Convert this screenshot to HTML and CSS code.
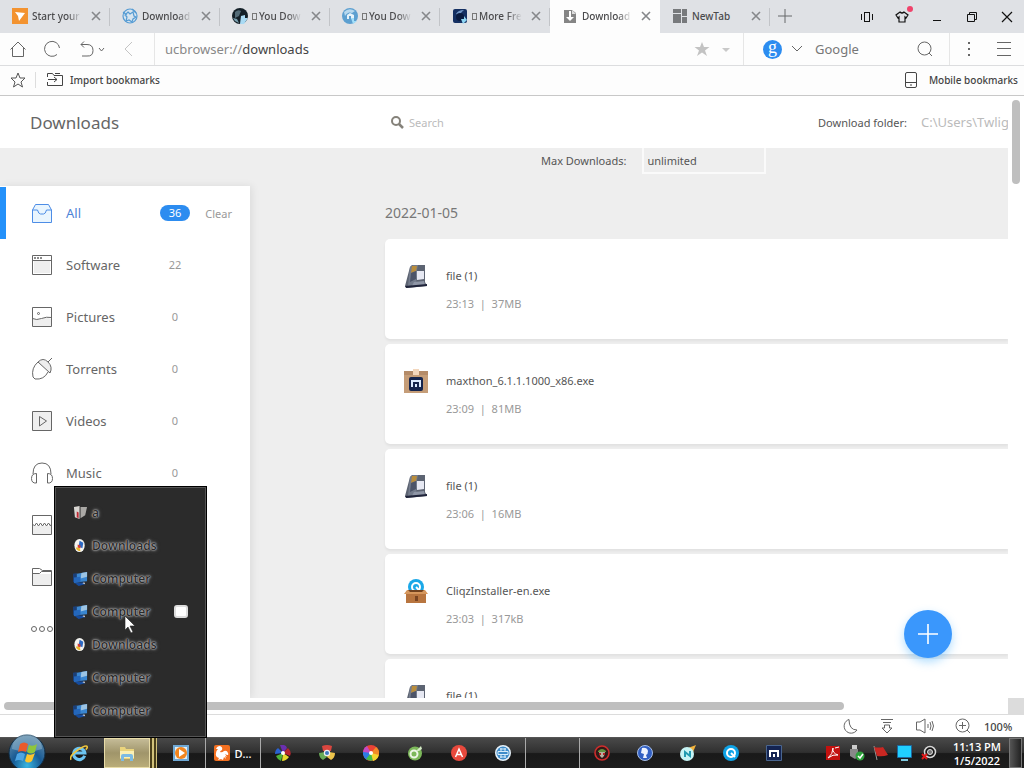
FILE: index.html
```
<!DOCTYPE html>
<html lang="en">
<head>
    <meta charset="UTF-8">
    <meta name="viewport" content="width=device-width, initial-scale=1.0">
    <title>Downloads</title>
    <link rel="stylesheet" href="styles.css">
</head>
<body>
    <!-- shared icons -->
    <svg class="sprite" aria-hidden="true">
        <symbol id="close" viewBox="0 0 16 16"><path d="M4 4l8 8M12 4l-8 8" stroke="#85878a" stroke-width="1.6"/></symbol>
        <symbol id="file" viewBox="0 0 24 24">
            <path d="M1 22L6 3l2-2h13v17l2 4L3 24z" fill="#5d6472"/>
            <path d="M6 3l3-2h5l-2 20-8 1z" fill="#747c8c"/>
            <path d="M8 2h5l-1 5-5 2z" fill="#b98d3c"/>
            <path d="M7 9l5-2v8l-6 3z" fill="#4c5468"/>
            <path d="M14 2h6v4l-7 1z" fill="#5c6472"/>
            <path d="M13 7h7v8l-7 1z" fill="#e6e8f2"/>
            <path d="M10 18l10-1 1 4-13 1z" fill="#8f96a6"/>
            <path d="M1 22l22-2v2L2 24z" fill="#20243a"/>
        </symbol>
        <symbol id="computer" viewBox="0 0 16 16">
            <path d="M0 3l4-1v9l-4 1z" fill="#1b3f78"/>
            <path d="M4 3l11-2v10L4 12z" fill="#3a86d0"/>
            <path d="M9 2l6-1v5l-7 2z" fill="#9cc4e4"/>
            <path d="M1 7l7-1v6l-7 1z" fill="#2467bb"/>
            <path d="M2 13l9-1 2 2-7 2z" fill="#154b9e"/>
            <path d="M10 13l2-1 1 2z" fill="#ddd"/>
        </symbol>
        <symbol id="downloads" viewBox="0 0 16 16">
            <ellipse cx="7" cy="8" rx="5.500" ry="7" fill="#f4f4f0"/>
            <path d="M3 10q1 4 5 4l-1-4z" fill="#e8b62c"/>
            <path d="M7 3l4 2-1 6-4-2z" fill="#2c69c4"/>
            <path d="M5 7l3 1v3l-3-1z" fill="#d23c35"/>
        </symbol>
    </svg>

    <header class="tabs">
        <div class="tab">
            <svg class="favicon" viewBox="0 0 16 16"><path fill="#f39330" d="M0 0h16v16H0z"/><path d="M3 4l10 1-6 8-1-5z" fill="#fff"/></svg>
            <span class="tab-title">Start your</span>
            <button class="tab-close" aria-label="Close tab"><svg><use href="#close"/></svg></button>
        </div>
        <div class="tab">
            <svg class="favicon" viewBox="0 0 16 16" fill="none" stroke="#559bd3" stroke-width="1.2"><circle cx="8" cy="8" r="7" fill="#d6e4ef"/><path d="M1 4l4 3M6 4l2 2 3-2 1 4 2 1-3 2-1 3-3-2-3 1 1-4-2-2zM10 1l4 4"/></svg>
            <span class="tab-title">Download</span>
            <button class="tab-close" aria-label="Close tab"><svg><use href="#close"/></svg></button>
        </div>
        <div class="tab">
            <svg class="favicon" viewBox="0 0 16 16"><circle cx="8" cy="8" r="8" fill="#142028"/><path d="M3 4q3-3 6-1L7 8l-4 2z" fill="#536b77"/><path d="M9 8l4-1v3h3l-4 6H8z" fill="#a9daf4"/><path d="M1 10l4 1 2 4-4-2z" fill="#7ca2b2"/></svg>
            <span class="tab-title"><i class="missing"></i>You Dow</span>
            <button class="tab-close" aria-label="Close tab"><svg><use href="#close"/></svg></button>
        </div>
        <div class="tab">
            <svg class="favicon" viewBox="0 0 16 16"><circle cx="8" cy="8" r="8" fill="#5c9fd0"/><path d="M2 4q5-5 11-1l-3 2q-4-2-7 3z" fill="#b7d8ee"/><path d="M5 11V7l3-2 4 2v4H9V8H7v3z" fill="#e5f2fa"/><path d="M9 10h3v3h3l-4 3z" fill="#a2def9"/></svg>
            <span class="tab-title"><i class="missing"></i>You Dow</span>
            <button class="tab-close" aria-label="Close tab"><svg><use href="#close"/></svg></button>
        </div>
        <div class="tab">
            <svg class="favicon" viewBox="0 0 16 16"><rect x="1" y="1" width="14" height="14" rx="2" fill="#142f62"/><path d="M4 6q2-4 8-4-4 3-4 6z" fill="#7095c6"/><circle cx="8" cy="9" r="4" fill="#0a1b40"/><path d="M9 11h3V8l3 4-4 4z" fill="#8ed5f3"/></svg>
            <span class="tab-title"><i class="missing"></i>More Fre</span>
            <button class="tab-close" aria-label="Close tab"><svg><use href="#close"/></svg></button>
        </div>
        <div class="tab active">
            <svg class="favicon" viewBox="0 0 16 16"><path d="M2 2h8l4 3v10H2z" fill="#858585"/><path d="M10 2v4h4z" fill="#ddd"/><path d="M7 3h2v6h3l-4 4-4-4h3z" fill="#fff"/></svg>
            <span class="tab-title">Download</span>
            <button class="tab-close" aria-label="Close tab"><svg><use href="#close"/></svg></button>
        </div>
        <div class="tab last">
            <svg class="favicon" viewBox="0 0 16 16" fill="#77797c"><path d="M1 1h8v4H1zM1 6h8v9H1zM10 1h5v7h-5zM10 9h5v6h-5z"/></svg>
            <span class="tab-title">NewTab</span>
            <button class="tab-close" aria-label="Close tab"><svg><use href="#close"/></svg></button>
        </div>
        <button class="new-tab" aria-label="New tab"><svg width="14" height="14" viewBox="0 0 14 14"><path d="M7 0v14M0 7h14" stroke="#66686b"/></svg></button>
        <div class="window-buttons">
            <button aria-label="Phone"><svg width="14" height="14" viewBox="0 0 14 14" fill="none" stroke="#111"><rect x="4.500" y="2.500" width="5" height="9"/><path d="M1.500 4v6M12.500 4v6"/></svg></button>
            <button class="skin" aria-label="Skins"><svg width="14" height="14" viewBox="0 0 14 14" fill="none" stroke="#111" stroke-width="1.2"><path d="M5 2q2 2 4 0l4 3-2 3-1-1v5H4V7L3 8 1 5z"/></svg></button>
            <button aria-label="Minimize"><svg width="14" height="14" viewBox="0 0 14 14"><path d="M3 10.500h8" stroke="#111"/></svg></button>
            <button aria-label="Restore"><svg width="14" height="14" viewBox="0 0 14 14" fill="none" stroke="#111"><path d="M2.500 4.500h7v7h-7zM4.500 4V2.500h7v7H10"/></svg></button>
            <button aria-label="Close"><svg width="14" height="14" viewBox="0 0 14 14"><path d="M2 2l10 10M12 2L2 12" stroke="#111" stroke-width="1.200"/></svg></button>
        </div>
    </header>

    <div class="toolbar">
        <div class="nav">
            <button class="nav-btn" aria-label="Home"><svg width="18" height="18" viewBox="0 0 18 18"><path d="M1.500 9.500L9 2l7.500 7.500M3.500 8v8.500h11V8"/></svg></button>
            <button class="nav-btn" aria-label="Reload"><svg width="18" height="18" viewBox="0 0 18 18"><path d="M13 14.500A7.500 7.500 0 1 1 15.500 8"/></svg></button>
            <button class="nav-btn" aria-label="Undo close tab"><svg width="26" height="18" viewBox="0 0 26 18"><path d="M5 1.500L2 4.500l3 3M2 4.500h6q6 0 6 6t-6 5.500H3M20 8l2.500 3L25 8"/></svg></button>
            <button class="nav-btn back" aria-label="Back"><svg width="18" height="18" viewBox="0 0 18 18"><path d="M10 2L3 9l7 7"/></svg></button>
        </div>
        <div class="address">
            <span class="url"><span class="scheme">ucbrowser://</span>downloads</span>
            <button class="plain" aria-label="Bookmark"><svg width="16" height="16" viewBox="0 0 16 16"><path d="M8 1l2 5h5.500l-4.500 3.500 2 5.500-5-3.500L3 15l2-5.500L.5 6H6z" fill="#c3c3c3"/></svg></button>
            <button class="plain" aria-label="Bookmark options"><svg width="16" height="16" viewBox="0 0 16 16"><path d="M4 7h8l-4 4z" fill="#c9c9c9"/></svg></button>
        </div>
        <div class="engine">
            <span class="engine-logo">g</span>
            <button class="plain" aria-label="Choose engine"><svg width="12" height="12" viewBox="0 0 12 12"><path d="M1 3l5 5 5-5" fill="none" stroke="#666"/></svg></button>
            <input type="text" class="engine-input" placeholder="Google" aria-label="Google">
            <button class="plain" aria-label="Search the web"><svg width="16" height="16" viewBox="0 0 16 16" fill="none" stroke="#666"><circle cx="7.500" cy="7.500" r="6.500"/><path d="M12 12l3 3"/></svg></button>
        </div>
        <div class="menus">
            <button class="plain" aria-label="More"><svg width="16" height="16" viewBox="0 0 16 16" fill="#666"><path d="M7 1h2v2H7zM7 7h2v2H7zM7 13h2v2H7z"/></svg></button>
            <button class="plain" aria-label="Menu"><svg width="16" height="16" viewBox="0 0 16 16"><path d="M1 1.500h14M1 7.500h14M1 14.500h14" stroke="#666"/></svg></button>
        </div>
    </div>

    <div class="bookmarks">
        <button class="plain star" aria-label="Bookmarks"><svg width="16" height="16" viewBox="0 0 16 16"><path d="M8 1l2 5h5l-4 4 1.500 5L8 12l-4.500 3L5 10 1 6h5z" fill="none" stroke="#555"/></svg></button>
        <button class="bookmark-link"><svg width="16" height="16" viewBox="0 0 16 16" fill="none" stroke="#444"><path d="M.5 5V1.500h5L7 3.500h8.500v10H.5V10M8 1.500h5M1 7.500h9M7 5l3 2.500-3 2.500"/></svg>Import bookmarks</button>
        <button class="bookmark-link mobile"><svg width="12" height="16" viewBox="0 0 12 16" fill="none" stroke="#444"><rect x=".5" y=".5" width="11" height="15" rx="1.500"/><path d="M1 10.500h10M5 13h2"/></svg>Mobile bookmarks</button>
    </div>

    <main class="view">
        <div class="page">
            <div class="page-head">
                <h1>Downloads</h1>
                <label class="search">
                    <svg width="13" height="13" viewBox="0 0 13 13" fill="none" stroke="#85827a"><circle cx="5" cy="5" r="4" stroke-width="2"/><path d="M8 8l4 4" stroke-width="2.500"/></svg>
                    <input type="text" placeholder="Search" aria-label="Search">
                </label>
                <label for="folder">Download folder:</label>
                <input type="text" id="folder" value="C:\Users\Twlig">
            </div>
            <div class="limit">
                <label for="max">Max Downloads:</label>
                <select id="max"><option>unlimited</option></select>
            </div>
            <div class="columns">
                <nav class="sidebar">
                    <a href="#" class="cat current">
                        <svg viewBox="0 0 22 22"><path d="M1.500 8v12.500h19V8M1.500 8l3-5.500h13l3 5.500M1.500 8h5q1 4 3 4h3q2 0 3-4h5"/></svg>
                        <span>All</span><b class="count">36</b><span class="clear">Clear</span>
                    </a>
                    <a href="#" class="cat">
                        <svg viewBox="0 0 22 22"><path class="shade" d="M3 7h16v12H3z"/><path d="M1.500 1.500h19v19h-19zM1.500 6.500h19"/><path d="M3 4h2m1 0h2m1 0h2" stroke-width="1.500"/></svg>
                        <span>Software</span><b class="count">22</b>
                    </a>
                    <a href="#" class="cat">
                        <svg viewBox="0 0 22 22"><path class="shade" d="M2 13q5 2 9 0t9 0v7H2z"/><path d="M1.500 1.500h19v19h-19zM1.500 12.500q4 2 9 0t10-1"/><circle cx="7.500" cy="7.500" r="1"/></svg>
                        <span>Pictures</span><b class="count">0</b>
                    </a>
                    <a href="#" class="cat">
                        <svg viewBox="0 0 22 22"><path class="shade" d="M7 4q5-4 10 1t2 10z"/><path d="M7 4L19 15M7 4q5-5 10 0t2 11M7 4q-7 6-5 15l2 2q9 1 13-7M17 4l4-4"/></svg>
                        <span>Torrents</span><b class="count">0</b>
                    </a>
                    <a href="#" class="cat">
                        <svg viewBox="0 0 22 22"><path class="shade" d="M2 2h18v18H2z"/><path d="M1.500 1.500h19v19h-19zM8.500 6.500l7 4.500-7 5z"/></svg>
                        <span>Videos</span><b class="count">0</b>
                    </a>
                    <a href="#" class="cat">
                        <svg viewBox="0 0 22 22"><path d="M2 12q0-11 9-11t9 11M5.500 11.500q-5 0-5 5t5 4.500zM16.500 11.500q5 0 5 5t-5 4.500z"/></svg>
                        <span>Music</span><b class="count">0</b>
                    </a>
                    <a href="#" class="cat" aria-label="Archives">
                        <svg viewBox="0 0 22 22"><path class="shade" d="M2 12h18v8H2z"/><path d="M1.500 1.500h19v19h-19zM1.500 10l2 2 2-3 2 3 2-3 2 3 2-3 2 3 2-3 2 3 1-2"/></svg>
                    </a>
                    <a href="#" class="cat" aria-label="Documents">
                        <svg viewBox="0 0 22 22"><path class="shade" d="M2 8h18v11H2z"/><path d="M1.500 2.500h7l3 2h9v15h-19zM1.500 7.500h7l2-2h10"/></svg>
                    </a>
                    <a href="#" class="cat" aria-label="Other">
                        <svg viewBox="0 0 22 22"><circle cx="3" cy="11" r="2.500"/><circle cx="11" cy="11" r="2.500"/><circle cx="19" cy="11" r="2.500"/></svg>
                    </a>
                </nav>
                <section class="list">
                    <h2>2022-01-05</h2>
                    <article class="card">
                        <svg><use href="#file"/></svg>
                        <div><p class="name">file (1)</p><p class="meta">23:13&nbsp; |&nbsp; 37MB</p></div>
                    </article>
                    <article class="card">
                        <svg viewBox="0 0 24 24"><path d="M0 2h24v22H0z" fill="#c59d78"/><path d="M0 2h24v4H0z" fill="#b48b68"/><path d="M9 0h6v6H9z" fill="#f3d7bd"/><rect x="5" y="8" width="14" height="14" rx="2" fill="#14244d"/><path d="M8 18v-6h8v6M12 18v-3" fill="none" stroke="#dcebff" stroke-width="2"/></svg>
                        <div><p class="name">maxthon_6.1.1.1000_x86.exe</p><p class="meta">23:09&nbsp; |&nbsp; 81MB</p></div>
                    </article>
                    <article class="card">
                        <svg><use href="#file"/></svg>
                        <div><p class="name">file (1)</p><p class="meta">23:06&nbsp; |&nbsp; 16MB</p></div>
                    </article>
                    <article class="card">
                        <svg viewBox="0 0 24 24"><circle cx="12" cy="8" r="8" fill="#1ba8e8"/><circle cx="12" cy="8" r="4" fill="none" stroke="#fff" stroke-width="2"/><path d="M12 8l4 4" stroke="#fff" stroke-width="2"/><path d="M2 12h20v12H2z" fill="#b8753f"/><path d="M0 15l3-4h18l3 4z" fill="#d6975d"/><path d="M4 11h16l-2 2H6z" fill="#71421f"/><path d="M11 17h3v5h-3z" fill="#7a4522"/></svg>
                        <div><p class="name">CliqzInstaller-en.exe</p><p class="meta">23:03&nbsp; |&nbsp; 317kB</p></div>
                    </article>
                    <article class="card">
                        <svg><use href="#file"/></svg>
                        <div><p class="name">file (1)</p></div>
                    </article>
                </section>
            </div>
        </div>
        <div class="vbar"><div class="thumb"></div></div>
        <div class="hbar"><div class="thumb"></div></div>
        <div class="corner"></div>
        <button class="add" aria-label="New download"><svg width="20" height="20" viewBox="0 0 20 20"><path d="M10 0v20M0 10h20" stroke="#fff" stroke-width="1.600"/></svg></button>
    </main>

    <footer class="status">
        <button class="plain" aria-label="Night mode"><svg width="16" height="16" viewBox="0 0 16 16"><path d="M6 1.500A7 7 0 1 0 14 12Q6 12 6 1.500z"/></svg></button>
        <button class="plain" aria-label="Downloads"><svg width="16" height="16" viewBox="0 0 16 16"><path d="M2 1.500h12M4 4.500h8M5.500 7v3H3l5 5 5-5h-2.500V7z"/></svg></button>
        <button class="plain sound" aria-label="Sound"><svg width="20" height="16" viewBox="0 0 20 16"><path d="M1.500 4v8H5l5 3V1L5 4zM13 6v4M15 4q2 4 0 8M17 3q3 5 0 10"/></svg></button>
        <button class="plain" aria-label="Zoom"><svg width="16" height="16" viewBox="0 0 16 16"><circle cx="7.500" cy="7.500" r="6.500"/><path d="M4 7.500h7M7.500 4v7M12 12l3 3"/></svg></button>
        <span class="zoom">100%</span>
    </footer>

    <div class="taskbar">
        <button class="start" aria-label="Start"><svg width="38" height="38" viewBox="0 0 38 38">
            <defs><radialGradient id="orb" cx=".5" cy=".85" r=".8"><stop offset="0" stop-color="#38b6e2"/><stop offset=".5" stop-color="#175a94"/><stop offset="1" stop-color="#5f89a8"/></radialGradient></defs>
            <circle cx="19" cy="19" r="18" fill="url(#orb)" stroke="#102c44"/>
            <path d="M4 15a15 15 0 0 1 30 0q-15 5-30 0z" fill="#9fc0d4" opacity=".45"/>
            <path d="M12 10q4-3 8 0l-2 8q-4-2-8 0z" fill="#ea5a2a"/><path d="M21 11q4 2 8-1l-2 8q-4 3-8 0z" fill="#8fc63d"/>
            <path d="M9 20q4-3 8 0l-2 7q-4-2-8 0z" fill="#4da5e4"/><path d="M19 20q4 2 8-1l-3 8q-4 3-7 0z" fill="#fbc42d"/>
        </svg></button>
        <button class="task pin" aria-label="Internet Explorer"><svg viewBox="0 0 16 16" fill="none"><path d="M13 10.500A5 5 0 1 1 13.200 8H4" stroke="#6cc4f2" stroke-width="2.800"/><path d="M1 14q-2-3 5-8t9-4q1 1-1 3" stroke="#f0c63c" stroke-width="1.400"/></svg></button>
        <div class="explorer">
            <button class="task stacked" aria-label="Explorer"><svg viewBox="0 0 16 16"><path d="M1 2h5l1 2h8v10H1z" fill="#ead47c"/><path d="M1 6h14v7H1z" fill="#fbf0b4"/><path d="M2 16v-5q0-2 2-2h8q2 0 2 2v5h-3v-4H5v4z" fill="#7dbbe2"/></svg></button>
            <ul class="jump">
                <li><svg viewBox="0 0 16 16"><path d="M1 2l6-1v14l-5-2z" fill="#d9d6d2"/><path d="M8 2h7l-2 9-5 3z" fill="#aaa8a5"/><path d="M4 7l2 1v6l-2-1z" fill="#bf2632"/></svg>a</li>
                <li><svg><use href="#downloads"/></svg>Downloads</li>
                <li><svg><use href="#computer"/></svg>Computer</li>
                <li><svg><use href="#computer"/></svg><label for="pick">Computer</label><input type="checkbox" id="pick"></li>
                <li><svg><use href="#downloads"/></svg>Downloads</li>
                <li><svg><use href="#computer"/></svg>Computer</li>
                <li><svg><use href="#computer"/></svg>Computer</li>
            </ul>
            <svg class="cursor" viewBox="0 0 12 19"><path d="M1 1v14l3-3 3 6 2-1-3-6h5z" fill="#fff" stroke="#222" stroke-width=".6"/></svg>
        </div>
        <button class="task player" aria-label="Media player"><svg viewBox="0 0 16 16"><rect width="16" height="16" fill="#6fa9d6"/><path d="M2 2h12v12H2z" fill="#e2edf3"/><circle cx="8" cy="8" r="6" fill="#f2851e"/><path d="M6 4l6 4-6 4z" fill="#fff"/></svg></button>
        <button class="task running"><svg viewBox="0 0 16 16"><rect width="16" height="16" rx="2" fill="#f37021"/><path d="M2 4q1-3 4-3 3 1 2 4-2 1-2 2 2 1 4-1 3-1 4 2 1 2-1 2l-2-1 2 3-2-1 1 3-2-2-1 3-2-1-3 1 1-2q-4-1-3-5 0-2 2-4z" fill="#fff"/></svg>D...</button>
        <div class="group">
            <button class="task" aria-label="Slimjet"><svg viewBox="0 0 16 16"><path d="M8 8L5 0q6-1 7 3z" fill="#6b2fb0"/><path d="M8 8l5-5q4 4 2 8z" fill="#b7252f"/><path d="M8 8l6 4q-3 4-7 4z" fill="#e8d82b"/><path d="M8 8l-2 8q-4-2-5-5z" fill="#4fb33a"/><path d="M8 8L0 9q0-4 3-6z" fill="#2a62d3"/><circle cx="8" cy="8" r="2" fill="#fff"/></svg></button>
            <button class="task" aria-label="Browser"><svg viewBox="0 0 16 16"><path d="M3 1q5-2 10 0l-1 5H4z" fill="#da463f"/><path d="M0 8l6-1 2 5-4 3q-4-2-4-7z" fill="#68ab57"/><path d="M16 8l-6-1-2 5 4 3q4-2 4-7z" fill="#edc44b"/><circle cx="8" cy="8" r="3.200" fill="#f0f0f0"/><circle cx="8" cy="8" r="2" fill="#3c7abf"/></svg></button>
            <button class="task" aria-label="Color browser"><svg viewBox="0 0 16 16"><circle cx="8" cy="8" r="8" fill="#e94235"/><path d="M8 8L0 8a8 8 0 0 1 4-7z" fill="#c34ac5"/><path d="M8 8L0 7a8 8 0 0 0 4 8z" fill="#2d7de4"/><path d="M8 8l-5 6a8 8 0 0 0 8 1z" fill="#43bd4a"/><path d="M8 8l2 8a8 8 0 0 0 6-8z" fill="#f5d42e"/><path d="M8 8l8 2a8 8 0 0 0-3-8z" fill="#f28a27"/><circle cx="8" cy="8" r="2" fill="#fff"/></svg></button>
            <button class="task" aria-label="Green browser"><svg viewBox="0 0 16 16"><circle cx="8" cy="8.500" r="7" fill="#7cb85a"/><circle cx="7" cy="9" r="3.500" fill="none" stroke="#eef6e8" stroke-width="2"/><path d="M9 6l5-5 1 3-3 2z" fill="#d4ebc4"/></svg></button>
            <button class="task" aria-label="A browser"><svg viewBox="0 0 16 16"><circle cx="8" cy="8" r="8" fill="#e8493d"/><path d="M4.500 12L8 4l3.500 8M6 9.500h4" fill="none" stroke="#fff" stroke-width="1.500"/></svg></button>
            <button class="task" aria-label="Globe"><svg viewBox="0 0 16 16"><circle cx="8" cy="8" r="8" fill="#e7f2fa"/><circle cx="8" cy="8" r="6.500" fill="#3d8bc9"/><path d="M5 4h6M3 6.500h10v3H3zM5 12h6M6 3v3M10 3v3M6 10v3M10 10v3" fill="none" stroke="#d8ecfa"/></svg></button>
        </div>
        <div class="group empty"></div>
        <div class="group narrow">
            <button class="task" aria-label="Pirate"><svg viewBox="0 0 16 16"><circle cx="8" cy="8" r="7" fill="#321a18" stroke="#cf2d2c" stroke-width="1.600"/><path d="M4 6q4-4 8 0v1H4z" fill="#65953f"/><path d="M5 7h6l-1 4-2 2-2-2z" fill="#b8b0a0"/><path d="M5 8h2v2H5zM9 8h2v2H9z" fill="#b52323"/></svg></button>
            <button class="task" aria-label="Knight"><svg viewBox="0 0 16 16"><circle cx="8" cy="8" r="7.500" fill="#315fc3" stroke="#a8bfe7"/><path d="M5 3q5-1 6 3 0 3-2 4l1 3H6l1-4-3-1z" fill="#eef3ff"/></svg></button>
            <button class="task" aria-label="Comet"><svg viewBox="0 0 16 16"><path d="M8 3l8-3-3 7z" fill="#f2b33c"/><circle cx="7" cy="9" r="7" fill="#c6f3f4"/><path d="M5 12V7l5 4V6" fill="none" stroke="#219ab0" stroke-width="2"/></svg></button>
            <button class="task" aria-label="Cliqz"><svg viewBox="0 0 16 16"><circle cx="8" cy="8" r="8" fill="#0fa3e6"/><circle cx="8" cy="8" r="4" fill="none" stroke="#fff" stroke-width="2"/><path d="M8 8l4 4" stroke="#fff" stroke-width="2"/></svg></button>
            <button class="task" aria-label="Maxthon"><svg viewBox="0 0 16 16"><path d="M.5.5h15v15H.5z" fill="#142452" stroke="#49658f"/><path d="M4 12V6h8v6M8 12V9" fill="none" stroke="#fff" stroke-width="2"/></svg></button>
        </div>
        <div class="tray">
            <svg viewBox="0 0 16 16"><path d="M1 1h14v14H1z" fill="#c3110f"/><path d="M3 13q5-4 5-10-1 5 5 7-5-1-10 3M10 3l4-1" fill="none" stroke="#fff"/></svg>
            <svg viewBox="0 0 16 16"><path d="M3 0h5v4H3z" fill="#ccc"/><path d="M1 4h8v8l-3 2-5-3z" fill="#888"/><circle cx="11" cy="11" r="4.500" fill="#2da13b"/><path d="M9 11l2 2 3-4" fill="none" stroke="#fff" stroke-width="1.500"/></svg>
            <svg viewBox="0 0 16 16"><path d="M1 1l3 14" stroke="#999"/><path d="M1 2q5 1 9 0l5 8q-5 2-11 1z" fill="#c92722"/></svg>
            <svg viewBox="0 0 16 16"><path d="M.5.5h14v12H.5z" fill="#20cfff" stroke="#1e679e"/><path d="M4 14h7v2H4z" fill="#7fc9e0"/></svg>
            <svg viewBox="0 0 16 16"><circle cx="9" cy="7" r="5.500" fill="#171717" stroke="#d8d8d8" stroke-width="1.500"/><circle cx="9" cy="7" r="2.500" fill="#777" stroke="#ddd"/><path d="M1 9l5 5M6 9l-5 5" stroke="#e01818" stroke-width="2"/></svg>
        </div>
        <div class="clock">11:13 PM<br>1/5/2022</div>
        <button class="show-desktop" aria-label="Show desktop"></button>
    </div>
</body>
</html>
```
FILE: styles.css
```
* {
    box-sizing: border-box;
}
body {
    margin: 0;
    height: 100vh;
    display: flex;
    flex-direction: column;
    overflow: hidden;
    font-family: "Noto Sans", "Open Sans", sans-serif;
    font-size: 11px;
    color: #555;
    background: #fff;
}
button {
    border: none;
    background: none;
    padding: 0;
    font: inherit;
    color: inherit;
    cursor: pointer;
}
input, select {
    border: none;
    background: none;
    padding: 0;
    margin: 0;
    outline: none;
    font: inherit;
    color: inherit;
    min-width: 0;
}
svg {
    display: block;
    flex: none;
}
.sprite {
    display: none;
}

/* tab strip */
.tabs {
    display: flex;
    flex: none;
    height: 33px;
    background: #dfe1e5;
}
.tab {
    width: 110px;
    display: flex;
    align-items: center;
    padding: 0 6px 2px 12px;
    position: relative;
}
.tab::after {
    content: "";
    position: absolute;
    right: 0;
    top: 8px;
    height: 18px;
    border-right: 1px solid #c2c4c8;
}
.tab.active {
    background: #fdfdfd;
}
.tab.active::after {
    display: none;
}
.favicon {
    width: 16px;
    height: 16px;
    margin-right: 4px;
}
.tab-title {
    flex: 1;
    overflow: hidden;
    white-space: nowrap;
    font-size: 10px;
    font-weight: 500;
    color: #4a4a4c;
    mask-image: linear-gradient(to right, #000 70%, transparent);
}
.last .tab-title {
    mask-image: none;
}
.missing {
    display: inline-block;
    width: 5px;
    height: 7px;
    margin-right: 2px;
    border: 1px solid #777;
}
.tab-close {
    margin-left: 6px;
}
.tab-close svg {
    width: 16px;
    height: 16px;
}
.new-tab {
    width: 30px;
    display: flex;
    align-items: center;
    justify-content: center;
    padding-bottom: 2px;
}
.window-buttons {
    display: flex;
    margin-left: auto;
}
.window-buttons button {
    width: 35px;
    display: flex;
    align-items: center;
    justify-content: center;
    position: relative;
}
.skin::after {
    content: "";
    position: absolute;
    right: 6px;
    top: 6px;
    width: 6px;
    height: 6px;
    border-radius: 50%;
    background: #f0436b;
}

/* address bar */
.toolbar {
    display: flex;
    flex: none;
    height: 33px;
    background: #fdfdfd;
    border-bottom: 1px solid #dcdddf;
}
.nav {
    width: 154px;
    display: flex;
    align-items: center;
    gap: 17px;
    padding-left: 9px;
}
.nav-btn svg, .status svg {
    fill: none;
    stroke: #666;
}
.nav-btn.back svg {
    stroke: #c4c4c4;
}
.address {
    flex: 1;
    display: flex;
    align-items: center;
    gap: 8px;
    padding: 0 9px 0 10px;
    border-left: 1px solid #e6e6e6;
}
.url {
    flex: 1;
    font-size: 13px;
    color: #444;
}
.scheme {
    color: #888;
}
.engine {
    width: 206px;
    display: flex;
    align-items: center;
    padding: 0 16px 0 19px;
    border-left: 1px solid #e6e6e6;
}
.engine-logo {
    width: 19px;
    height: 19px;
    margin-right: 9px;
    border-radius: 50%;
    background: #2c8cf0;
    color: #fff;
    font: 18px/14px "Liberation Serif", serif;
    text-align: center;
}
.engine-input {
    flex: 1;
    margin: 0 12px;
    font-size: 13px;
}
.engine-input::placeholder {
    color: #777;
}
.menus {
    width: 75px;
    display: flex;
    align-items: center;
    justify-content: space-between;
    padding: 0 12px 0 11px;
    border-left: 1px solid #e6e6e6;
}

/* bookmarks bar */
.bookmarks {
    display: flex;
    align-items: center;
    flex: none;
    height: 30px;
    padding: 0 6px 1px 10px;
    background: #fdfdfd;
    border-bottom: 1px solid #c8c8c8;
    font-size: 10px;
    font-weight: 500;
    color: #444;
}
.star {
    padding-right: 9px;
    border-right: 1px solid #ddd;
}
.bookmark-link {
    display: flex;
    align-items: center;
    gap: 7px;
    margin-left: 11px;
}
.mobile {
    margin-left: auto;
    gap: 12px;
}

/* downloads page */
.view {
    flex: 1;
    min-height: 0;
    display: grid;
    grid-template: minmax(0, 1fr) 16px / minmax(0, 1fr) 16px;
    position: relative;
}
.page {
    display: flex;
    flex-direction: column;
    overflow: hidden;
    background: #eee;
}
.page-head {
    flex: none;
    height: 52px;
    display: flex;
    align-items: center;
    padding-left: 30px;
    background: #fff;
}
h1 {
    width: 361px;
    margin: 0;
    font-size: 17px;
    font-weight: 400;
    color: #666;
}
.search {
    flex: 1;
    display: flex;
    align-items: center;
    gap: 5px;
}
.search input::placeholder {
    color: #bbb;
}
#folder {
    width: 87px;
    margin-left: 14px;
    font-size: 13px;
    color: #bbb;
}
.limit {
    flex: none;
    height: 38px;
    display: flex;
    align-items: flex-start;
    gap: 16px;
    padding-left: 541px;
    line-height: 26px;
}
#max {
    appearance: none;
    width: 124px;
    height: 26px;
    padding-left: 3px;
    border: 2px solid #fafafa;
    border-top: none;
}
.columns {
    flex: 1;
    min-height: 0;
    display: flex;
}
.sidebar {
    width: 250px;
    padding-top: 1px;
    background: #fff;
    box-shadow: 2px 0 8px rgba(0, 0, 0, 0.08);
}
.cat {
    height: 52px;
    display: flex;
    align-items: center;
    padding: 0 18px 0 25px;
    border-left: 6px solid transparent;
    text-decoration: none;
    color: #666;
    font-size: 13px;
}
.cat svg {
    width: 22px;
    height: 22px;
    margin-right: 13px;
    fill: none;
    stroke: #666;
}
.cat .shade {
    fill: #eee;
    stroke: none;
}
.cat span:first-of-type {
    width: 94px;
}
.count {
    width: 30px;
    font-size: 11px;
    font-weight: 400;
    line-height: 16px;
    text-align: center;
    color: #999;
}
.clear {
    margin-left: auto;
    font-size: 11px;
    color: #999;
}
.current {
    border-left-color: #2491fa;
    color: #4d83d6;
}
.current svg {
    fill: #e9f5fe;
    stroke: #4d8de6;
}
.current .count {
    border-radius: 8px;
    background: #2c8cf0;
    color: #fff;
}
.list {
    flex: 1;
    overflow: hidden;
    padding-left: 135px;
}
h2 {
    margin: 0;
    height: 53px;
    line-height: 53px;
    font-size: 14px;
    font-weight: 400;
    color: #777;
}
.card {
    height: 100px;
    margin-bottom: 5px;
    display: flex;
    gap: 18px;
    padding: 25px 0 0 19px;
    border-radius: 5px 0 0 5px;
    background: #fff;
    box-shadow: 0 2px 3px rgba(0, 0, 0, 0.06);
}
.card svg {
    width: 24px;
    height: 24px;
}
.card p {
    margin: 0 0 4px;
    line-height: 24px;
}
.card .meta {
    color: #999;
}
.vbar {
    padding: 4px 4px 0;
}
.hbar {
    padding: 4px;
}
.thumb {
    border-radius: 4px;
    background: #bfbfbf;
}
.vbar .thumb {
    height: 14%;
}
.hbar .thumb {
    width: 84%;
    height: 8px;
}
.corner {
    background: #dcdcdc;
}
.add {
    position: absolute;
    right: 72px;
    bottom: 56px;
    width: 48px;
    height: 48px;
    display: flex;
    align-items: center;
    justify-content: center;
    border-radius: 50%;
    background: #3a97fc;
    box-shadow: 0 4px 10px rgba(58, 170, 252, 0.4);
}

/* status bar */
.status {
    flex: none;
    height: 23px;
    display: flex;
    align-items: center;
    justify-content: flex-end;
    gap: 20px;
    padding-right: 12px;
    border-top: 1px solid #dcdcdc;
    font-weight: 500;
    color: #444;
}
.zoom {
    width: 28px;
    margin-left: -7px;
}

/* taskbar */
.taskbar {
    flex: none;
    height: 31px;
    display: flex;
    border-top: 1px solid #555;
    background: linear-gradient(#494949, #303030 48%, #191919 52%, #1d1d1d);
    color: #fff;
    font-family: "Open Sans", "Noto Sans", sans-serif;
}
.start {
    width: 54px;
    display: flex;
    align-items: center;
    justify-content: center;
}
.task {
    width: 44px;
    height: 100%;
    display: flex;
    align-items: center;
    justify-content: center;
}
.task svg, .tray svg {
    width: 16px;
    height: 16px;
}
.pin {
    width: 50px;
}
.pin svg {
    width: 18px;
    height: 18px;
}
.explorer {
    width: 53px;
    position: relative;
}
.stacked {
    width: 46px;
    border: 1px solid #e8dca8;
    background: linear-gradient(#c4bb97, #a0956a 50%, #b9ac78);
    box-shadow: 2px 0 #493f1b, 4px 0 #d2c27b, 6px 0 #493f1b, 7px 0 #d2c27b;
}
.player {
    width: 49px;
    border-right: 1px solid #aaa;
}
.running {
    width: 55px;
    gap: 4px;
    border-right: 1px solid #aaa;
    font-weight: 600;
}
.group {
    display: flex;
}
.group:not(.narrow) {
    border-right: 1px solid #aaa;
}
.narrow .task {
    width: 43px;
}
.empty {
    width: 54px;
}
.tray {
    display: flex;
    align-items: center;
    gap: 8px;
    margin-left: auto;
}
.clock {
    width: 72px;
    padding-left: 8px;
    line-height: 14px;
    padding-top: 2px;
    text-align: center;
    font-weight: 600;
}
.show-desktop {
    width: 13px;
    margin-right: 2px;
    border: 1px solid #777;
    background: linear-gradient(90deg, #555, #222);
}

/* window list over the explorer button */
.jump {
    position: absolute;
    bottom: 100%;
    left: -50px;
    width: 153px;
    margin: 0;
    padding: 9px 18px 10px;
    list-style: none;
    border: 1px solid #000;
    background: #2b2b2b;
    box-shadow: inset 0 0 0 1px #555;
}
.jump li {
    height: 33px;
    display: flex;
    align-items: center;
    gap: 4px;
    font-size: 12px;
    font-weight: 600;
    color: #2a2a2a;
    text-shadow: 0 0 1px #ccc, 0 0 2px #aaa, 0 0 3px #999, 0 0 4px #777;
}
.jump svg {
    width: 15px;
    height: 15px;
}
.jump input {
    appearance: none;
    width: 14px;
    height: 13px;
    margin-left: auto;
    border: 2px solid #ddd;
    border-radius: 3px;
    background: #fff;
}
.cursor {
    position: absolute;
    left: 20px;
    bottom: 134px;
    width: 12px;
    height: 19px;
}
```
